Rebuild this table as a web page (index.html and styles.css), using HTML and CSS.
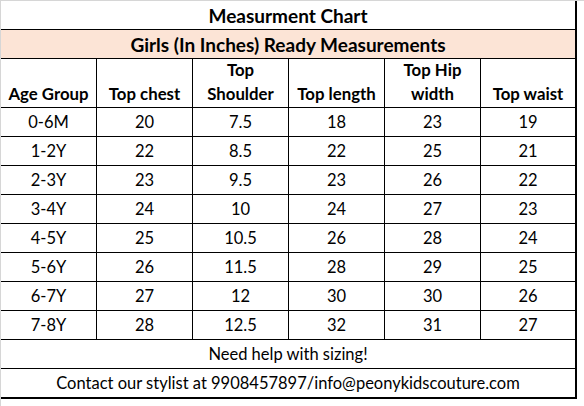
FILE: index.html
```html
<!DOCTYPE html>
<html>
<head>
<meta charset="utf-8">
<link rel="stylesheet" href="styles.css">
</head>
<body>
<div class="sheet">
  <div class="chart">
    <div class="cell wide title">Measurment Chart</div>
    <div class="cell wide subtitle">Girls (In Inches) Ready Measurements</div>
    <div class="cell head">Age Group</div>
    <div class="cell head">Top chest</div>
    <div class="cell head">Top<br>Shoulder</div>
    <div class="cell head">Top length</div>
    <div class="cell head">Top Hip<br>width</div>
    <div class="cell head">Top waist</div>

    <div class="cell">0-6M</div><div class="cell">20</div><div class="cell">7.5</div><div class="cell">18</div><div class="cell">23</div><div class="cell">19</div>
    <div class="cell">1-2Y</div><div class="cell">22</div><div class="cell">8.5</div><div class="cell">22</div><div class="cell">25</div><div class="cell">21</div>
    <div class="cell">2-3Y</div><div class="cell">23</div><div class="cell">9.5</div><div class="cell">23</div><div class="cell">26</div><div class="cell">22</div>
    <div class="cell">3-4Y</div><div class="cell">24</div><div class="cell">10</div><div class="cell">24</div><div class="cell">27</div><div class="cell">23</div>
    <div class="cell">4-5Y</div><div class="cell">25</div><div class="cell">10.5</div><div class="cell">26</div><div class="cell">28</div><div class="cell">24</div>
    <div class="cell">5-6Y</div><div class="cell">26</div><div class="cell">11.5</div><div class="cell">28</div><div class="cell">29</div><div class="cell">25</div>
    <div class="cell">6-7Y</div><div class="cell">27</div><div class="cell">12</div><div class="cell">30</div><div class="cell">30</div><div class="cell">26</div>
    <div class="cell">7-8Y</div><div class="cell">28</div><div class="cell">12.5</div><div class="cell">32</div><div class="cell">31</div><div class="cell">27</div>

    <div class="cell wide">Need help with sizing!</div>
    <div class="cell wide">Contact our stylist at 9908457897/info@peonykidscouture.com</div>
  </div>
</div>
</body>
</html>
```

FILE: styles.css
```css
html, body {
  margin: 0;
  padding: 0;
  background: #ffffff;
}

.sheet {
  width: 584px;
  height: 406px;
  box-sizing: border-box;
  border-top: 1px solid #d6d6d6;
  border-left: 1px solid #d6d6d6;
}

.chart {
  display: grid;
  width: max-content;
  grid-template-columns: 95px 95px 95px 95px 95px 94px;
  grid-template-rows: 28px 28px 48px repeat(10, 28px);
  gap: 1px;
  background: #000000;
  border-right: 2px solid #000000;
  border-bottom: 2px solid #000000;
  font-family: Lato, "Liberation Sans", sans-serif;
  font-size: 16.5px;
  color: #000000;
}

.cell {
  background: #ffffff;
  display: flex;
  align-items: flex-end;
  justify-content: center;
  text-align: center;
  line-height: 24px;
  padding-bottom: 2px;
  box-sizing: border-box;
  white-space: nowrap;
}

.wide {
  grid-column: 1 / -1;
}

.title {
  font-weight: bold;
  font-size: 19px;
  padding-bottom: 1px;
}

.subtitle {
  font-weight: bold;
  font-size: 19px;
  background: #fce4d6;
  padding-bottom: 1px;
}

.head {
  font-weight: bold;
  font-size: 16.8px;
  padding-bottom: 1px;
}
```
